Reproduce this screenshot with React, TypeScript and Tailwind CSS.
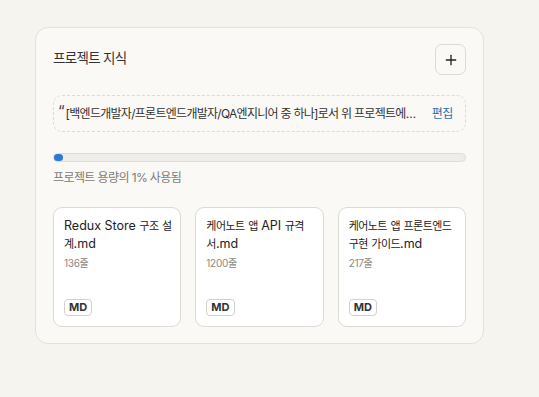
import { Plus } from "lucide-react";

type DocProps = {
  name: string;
  lines: string;
};

const docs: DocProps[] = [
  { name: "Redux Store 구조 설계.md", lines: "136줄" },
  { name: "케어노트 앱 API 규격서.md", lines: "1200줄" },
  { name: "케어노트 앱 프론트엔드 구현 가이드.md", lines: "217줄" },
];

// hangul runs get a slightly smaller, tighter size so they sit like the latin text
const Mixed = ({ text }: { text: string }) => (
  <>
    {text.split(/([가-힣]+)/).map((part, i) =>
      /[가-힣]/.test(part) ? (
        <span key={i} className="text-[11px] tracking-[-0.05em]">
          {part}
        </span>
      ) : (
        <span key={i}>{part}</span>
      ),
    )}
  </>
);

const DocCard = ({ name, lines }: DocProps) => (
  <div className="flex h-[120px] flex-col rounded-[9px] border border-[#dcdad3] bg-white pt-[9px] pr-[8px] pb-[9px] pl-[10px]">
    <p className="break-all text-[12.5px] leading-[18px] text-[#222]">
      <Mixed text={name} />
    </p>
    <p className="mt-[3px] text-[10px] leading-[14px] tracking-[-0.03em] text-[#8a8883]">{lines}</p>
    <div className="mt-auto">
      <span className="inline-block rounded-[4px] border border-[#d3d1ca] px-[4px] text-[11px] leading-[15px] font-bold text-[#333]">
        MD
      </span>
    </div>
  </div>
);

export default function App() {
  return (
    <div
      className="min-h-screen bg-[#f5f4ef] pt-[27px] pl-[35px]"
      style={{ fontFamily: 'Inter, "Noto Sans CJK KR", sans-serif' }}
    >
      <div className="w-[449px] rounded-[13px] border border-[#e3e1da] bg-[#faf9f6] px-[17px] pt-[16px] pb-[16px]">
        {/* Header */}
        <div className="flex items-center justify-between">
          <h2 className="-mt-[2px] text-[13.5px] tracking-[-0.05em] text-[#333]">프로젝트 지식</h2>
          <button className="flex h-[31px] w-[31px] items-center justify-center rounded-[7px] border border-[#dcdad3] bg-[#faf9f6]">
            <Plus size={16} strokeWidth={2} className="text-[#222]" />
          </button>
        </div>

        {/* Instructions */}
        <div className="mt-[20px] flex h-[37px] items-center rounded-[9px] border border-dashed border-[#dcdad3] pr-[12px] pl-[4px]">
          <span className="mr-[1px] -mt-[6px] text-[15px] leading-none text-[#444]">“</span>
          <span className="min-w-0 flex-1 truncate text-[12px] tracking-[-0.06em] text-[#333]">
            [백엔드개발자/프론트엔드개발자/QA엔지니어 중 하나]로서 위 프로젝트에 대한 작업을 수행합니다
          </span>
          <span className="ml-[14px] shrink-0 text-[12px] tracking-[-0.03em] text-[#2f6fb3]">편집</span>
        </div>

        {/* Capacity */}
        <div className="mt-[21px] h-[9px] rounded-full border border-[#dedcd4] bg-[#efede7]">
          <div className="h-full w-[9px] rounded-full bg-[#2b7ad8]" />
        </div>
        <p className="mt-[8px] text-[12px] leading-[16px] tracking-[-0.05em] text-[#7d7b76]">프로젝트 용량의 1% 사용됨</p>

        {/* Documents */}
        <div className="mt-[21px] grid grid-cols-3 gap-[14px]">
          {docs.map((doc, index) => (
            <DocCard key={index} {...doc} />
          ))}
        </div>
      </div>
    </div>
  );
}
